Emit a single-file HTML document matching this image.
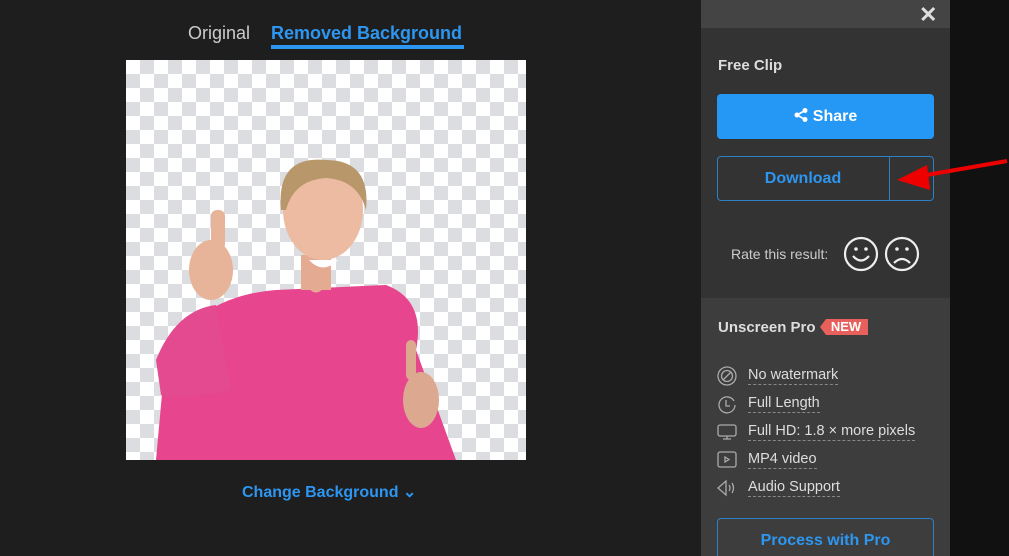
<!DOCTYPE html>
<html><head><meta charset="utf-8"><style>
*{margin:0;padding:0;box-sizing:border-box}
html,body{width:1009px;height:556px;overflow:hidden}
body{background:#1e1e1e;font-family:"Liberation Sans",sans-serif;position:relative}
.abs{position:absolute}
.tab{top:23px;font-size:18px}
.checker{left:126px;top:60px;width:400px;height:400px;background-color:#fff;
background-image:linear-gradient(45deg,#dcdde0 25%,transparent 25%,transparent 75%,#dcdde0 75%),linear-gradient(45deg,#dcdde0 25%,transparent 25%,transparent 75%,#dcdde0 75%);
background-size:28px 28px;background-position:0 0,14px 14px;overflow:hidden}
.panel{left:701px;top:0;width:249px;height:556px;background:#333}
.rt{left:950px;top:0;width:59px;height:556px;background:#111}
.feat{left:748px;font-size:14.5px;color:#ddd;border-bottom:1px dashed #888;padding-bottom:1px}
.ic{left:717px;width:20px;height:20px}
</style></head><body>
<div class="abs tab" style="left:188px;color:#ccc">Original</div>
<div class="abs tab" style="left:271px;color:#2d96f0;font-weight:bold">Removed Background</div>
<div class="abs" style="left:271px;top:45px;width:193px;height:4px;background:#2d96f0"></div>
<div class="abs checker">
<svg width="400" height="400" style="position:absolute;left:0;top:0">
<path d="M30 400 L40 290 Q80 235 150 230 L260 225 Q300 240 290 290 L330 400 Z" fill="#e8458f"/>
<path d="M30 300 Q50 250 90 245 L105 330 Q60 340 35 335 Z" fill="#e34a8f"/>
<ellipse cx="85" cy="210" rx="22" ry="30" fill="#e7b49a"/>
<rect x="85" y="150" width="14" height="40" rx="6" fill="#e7b49a"/>
<ellipse cx="295" cy="340" rx="18" ry="28" fill="#dca88f"/>
<rect x="280" y="280" width="10" height="40" rx="5" fill="#dca88f"/>
<path d="M175 215 Q190 250 205 215 Z" fill="#e5ab92"/>
<rect x="175" y="195" width="30" height="35" fill="#e5ab92"/>
<ellipse cx="197" cy="150" rx="40" ry="50" fill="#ecbba2"/>
<path d="M155 150 Q150 95 200 100 Q245 100 240 150 Q232 120 200 118 Q168 120 160 150 Z" fill="#b8976a"/>
<path d="M183 200 Q197 215 212 200 Z" fill="#fff"/>
</svg></div>
<div class="abs" style="left:242px;top:482px;color:#2d96f0;font-size:16px;font-weight:bold">Change Background &#8964;</div>
<div class="abs panel"></div>
<div class="abs" style="left:701px;top:0;width:249px;height:28px;background:#444"></div>
<div class="abs" style="left:919px;top:2px;color:#ddd;font-size:22px;font-weight:bold">✕</div>
<div class="abs" style="left:701px;top:298px;width:249px;height:258px;background:#3d3d3d"></div>
<div class="abs rt"></div>
<div class="abs" style="left:718px;top:57px;color:#ddd;font-size:15px;font-weight:bold">Free Clip</div>
<div class="abs" style="left:717px;top:94px;width:217px;height:45px;background:#2598f5;border-radius:4px;color:#fff;font-weight:bold;font-size:16px;text-align:center;line-height:45px">
<svg width="14" height="14" viewBox="0 0 14 14" style="vertical-align:-1px;margin-right:5px"><circle cx="11" cy="2.5" r="2.5" fill="#fff"/><circle cx="11" cy="11.5" r="2.5" fill="#fff"/><circle cx="3" cy="7" r="2.5" fill="#fff"/><path d="M3 7L11 2.5M3 7L11 11.5" stroke="#fff" stroke-width="1.6"/></svg>Share</div>
<div class="abs" style="left:717px;top:156px;width:217px;height:45px;border:1px solid #2d7fc6;border-radius:4px"></div>
<div class="abs" style="left:889px;top:157px;width:1px;height:43px;background:#2d7fc6"></div>
<div class="abs" style="left:717px;top:156px;width:172px;line-height:45px;text-align:center;color:#2d96f0;font-weight:bold;font-size:16px">Download</div>
<svg class="abs" style="left:895px;top:155px" width="114" height="40"><path d="M112 6L20 22" stroke="#e00" stroke-width="4"/><path d="M2 25L32 10L35 35Z" fill="#e00"/></svg>
<div class="abs" style="left:731px;top:246px;color:#ccc;font-size:14px">Rate this result:</div>
<svg class="abs" style="left:843px;top:235px" width="80" height="38"><g fill="none" stroke="#eee" stroke-width="2.2"><circle cx="18" cy="19" r="16"/><circle cx="59" cy="19" r="16"/><path d="M10 21Q18 30 26 21M51 28Q59 20 67 28"/></g><g fill="#eee"><circle cx="13" cy="14" r="1.8"/><circle cx="23" cy="14" r="1.8"/><circle cx="54" cy="14" r="1.8"/><circle cx="64" cy="14" r="1.8"/></g></svg>
<div class="abs" style="left:718px;top:319px;color:#ddd;font-size:15px;font-weight:bold">Unscreen Pro</div>
<div class="abs" style="left:820px;top:319px;width:48px;height:16px;background:#e8605c;color:#fff;font-size:13px;font-weight:bold;line-height:16px;text-align:center;padding-left:4px;clip-path:polygon(6px 0,100% 0,100% 100%,6px 100%,0 50%)">NEW</div>
<svg class="abs ic" style="top:366px" viewBox="0 0 20 20" fill="none" stroke="#aaa" stroke-width="1.3"><circle cx="10" cy="10" r="9"/><circle cx="10" cy="10" r="5.5"/><path d="M6 14L14 6"/></svg>
<div class="abs feat" style="top:367px">No watermark</div>
<svg class="abs ic" style="top:394px" viewBox="0 0 20 20" fill="none" stroke="#aaa" stroke-width="1.3"><path d="M17 7A8 8 0 1 0 18 11"/><path d="M9 6V12H13"/></svg>
<div class="abs feat" style="top:395px">Full Length</div>
<svg class="abs ic" style="top:422px" viewBox="0 0 20 20" fill="none" stroke="#aaa" stroke-width="1.3"><rect x="1" y="3" width="18" height="11" rx="2"/><path d="M10 14V17M6 17H14"/></svg>
<div class="abs feat" style="top:423px">Full HD: 1.8 × more pixels</div>
<svg class="abs ic" style="top:450px" viewBox="0 0 20 20" fill="none" stroke="#aaa" stroke-width="1.3"><rect x="1" y="2" width="18" height="15" rx="2"/><path d="M8 7L12 9.5L8 12Z"/></svg>
<div class="abs feat" style="top:451px">MP4 video</div>
<svg class="abs ic" style="top:478px" viewBox="0 0 20 20" fill="none" stroke="#aaa" stroke-width="1.3"><path d="M1 10L9 3V17Z"/><path d="M12 7Q14 10 12 13M15 5Q18 10 15 15"/></svg>
<div class="abs feat" style="top:479px">Audio Support</div>
<div class="abs" style="left:717px;top:518px;width:217px;height:45px;border:1px solid #2d7fc6;border-radius:4px;color:#2d96f0;font-weight:bold;font-size:16px;text-align:center;line-height:43px">Process with Pro</div>
</body></html>
